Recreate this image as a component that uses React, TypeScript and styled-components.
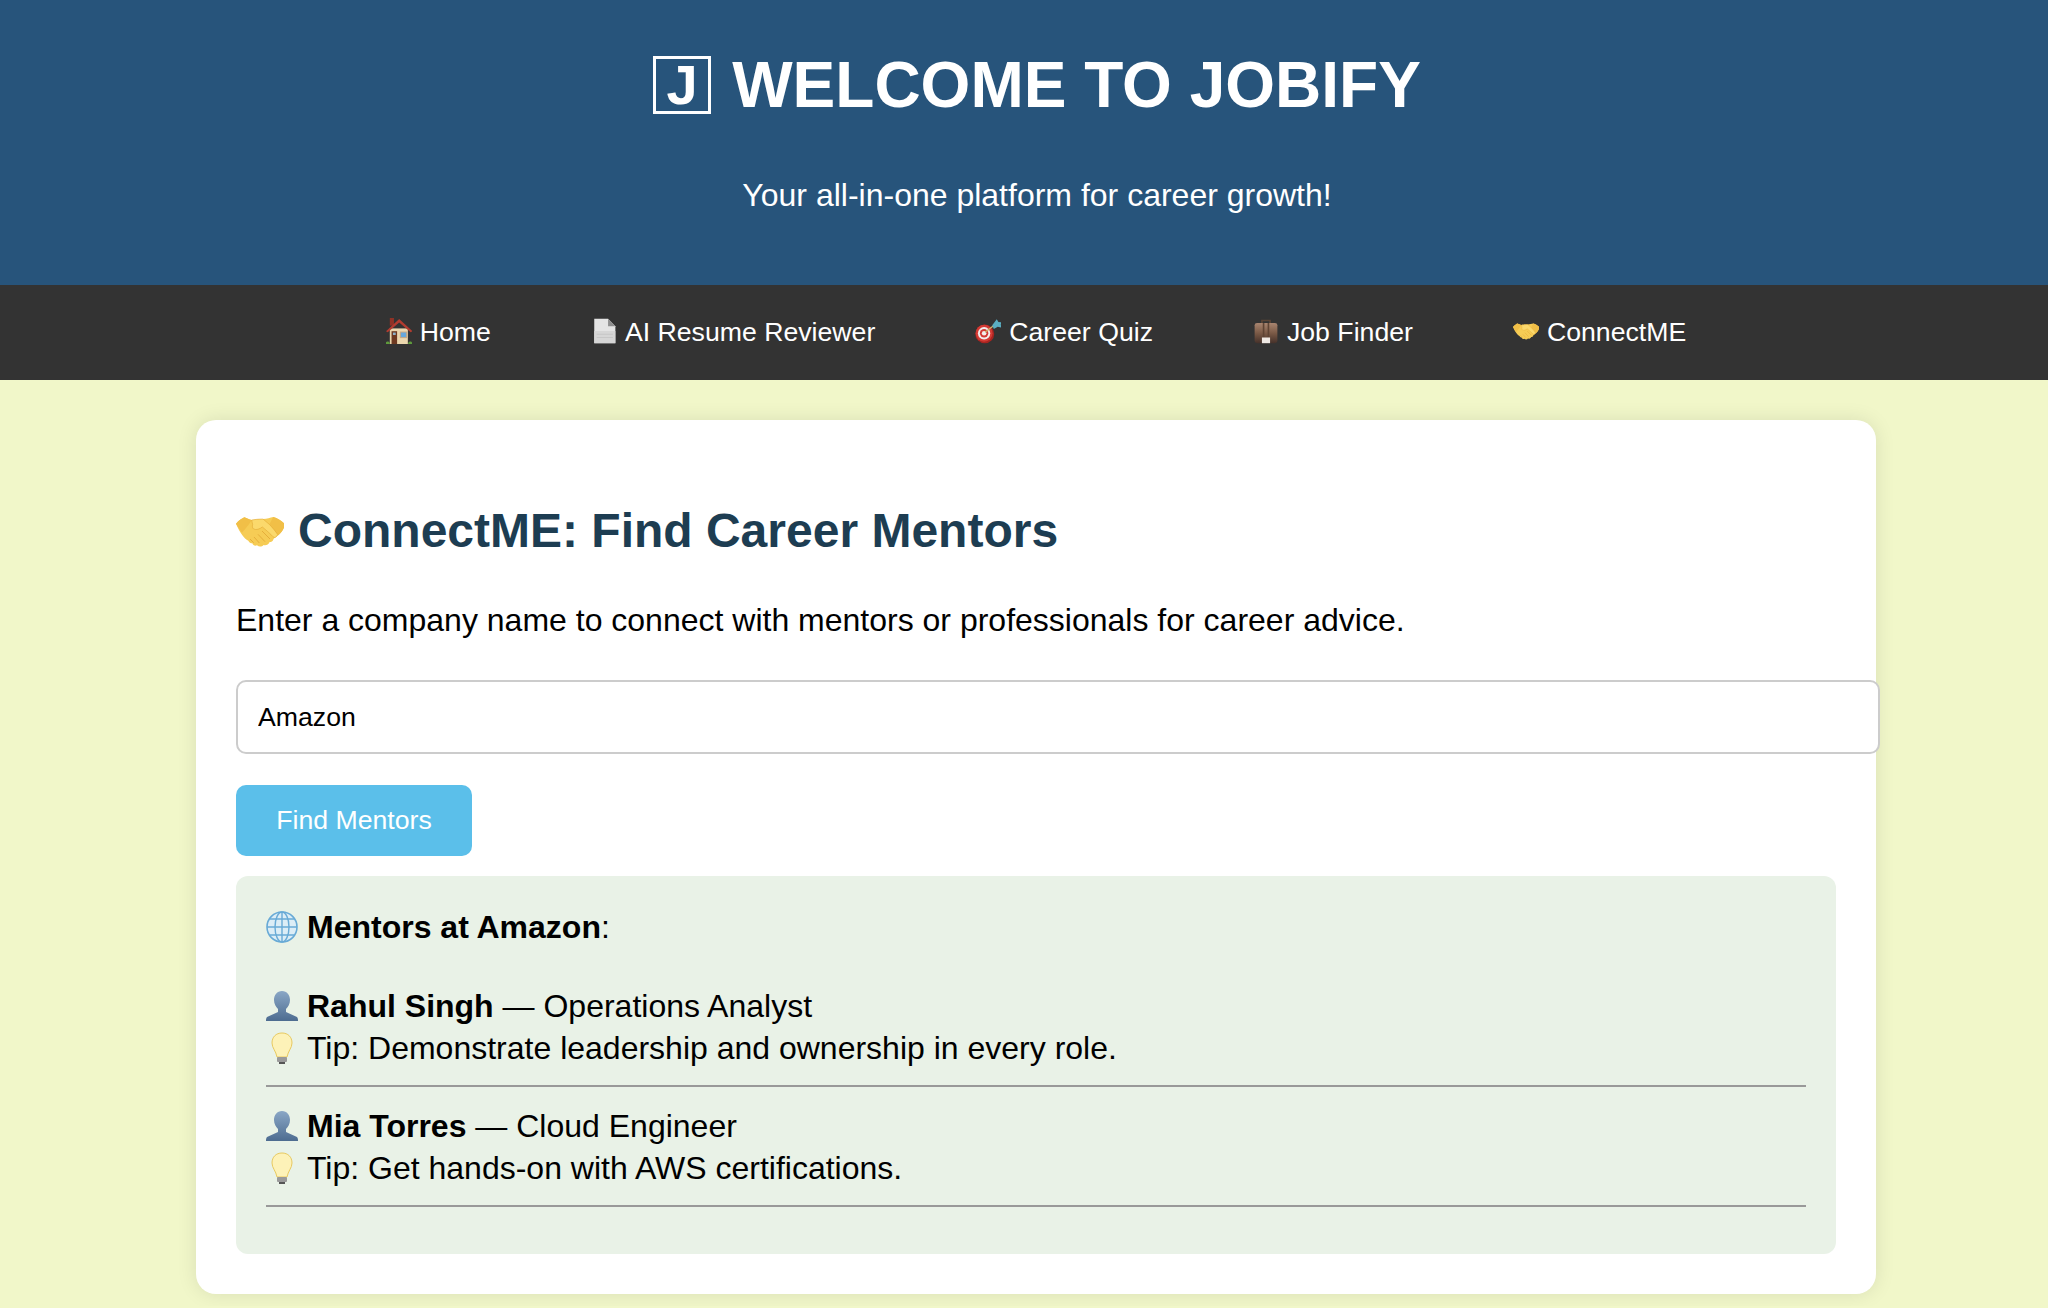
import React from "react";
import styled, { createGlobalStyle } from "styled-components";

const GlobalStyle = createGlobalStyle`
  html, body {
    margin: 0;
    padding: 0;
    background-color: #f1f7c9;
    font-family: "Liberation Sans", Arial, sans-serif;
    color: #000;
  }
`;

const Header = styled.header`
  background-color: #27547b;
  color: #fff;
  text-align: center;
  padding: 48px 0 74px 26px;
`;

const Title = styled.h1`
  margin: 0 0 57px;
  display: flex;
  justify-content: center;
  align-items: center;
  gap: 21px;
  font-size: 64px;
  line-height: 74px;
  font-weight: 700;
`;

const SquareJ = styled.span`
  box-sizing: border-box;
  width: 58px;
  height: 58px;
  border: 3px solid #fff;
  display: flex;
  justify-content: center;
  align-items: center;
  font-size: 56px;
  line-height: 1;
  font-weight: 700;
`;

const Subtitle = styled.p`
  margin: 0;
  font-size: 32px;
  line-height: 32px;
`;

const Nav = styled.nav`
  background-color: #333;
  height: 95px;
  padding-left: 24px;
  display: flex;
  justify-content: center;
  align-items: center;
  gap: 100px;
`;

const NavLink = styled.a`
  display: flex;
  align-items: center;
  gap: 8px;
  color: #fff;
  font-size: 26.67px;
  text-decoration: none;

  svg {
    margin-bottom: 3px;
  }
`;

const Card = styled.main`
  box-sizing: border-box;
  width: 1680px;
  margin: 40px 0 12px 196px;
  padding: 83px 40px 40px;
  background-color: #fff;
  border-radius: 20px;
  box-shadow: 0 0 20px rgba(0, 0, 0, 0.1);
`;

const Heading = styled.h2`
  margin: 0 0 43px;
  display: flex;
  align-items: center;
  gap: 14px;
  font-size: 48px;
  line-height: 56px;
  color: #1d3d52;
`;

const Intro = styled.p`
  margin: 0 0 41px;
  font-size: 32px;
  line-height: 37px;
`;

const CompanyInput = styled.input`
  display: block;
  box-sizing: content-box;
  width: 100%;
  height: 70px;
  padding: 0 20px;
  border: 2px solid #ccc;
  border-radius: 10px;
  font-family: inherit;
  font-size: 26.67px;
  color: #000;
  background: #fff;
  outline: none;
`;

const FindButton = styled.button`
  display: block;
  width: 236px;
  height: 71px;
  margin: 31px 0 20px;
  border: 0;
  border-radius: 10px;
  background-color: #5bbfea;
  color: #fff;
  font-family: inherit;
  font-size: 26.67px;
`;

const Results = styled.section`
  box-sizing: border-box;
  height: 378px;
  padding: 30px;
  background-color: #e9f2e7;
  border-radius: 12px;
  font-size: 32px;
  line-height: 42px;
`;

const ResultsTitle = styled.div`
  margin-bottom: 37px;
`;

const Line = styled.div`
  display: flex;
  align-items: center;
  gap: 9px;
  white-space: pre;
`;

const Divider = styled.hr`
  margin: 16px 0 18px;
  height: 2px;
  border: 0;
  background-color: #999;
`;

const EmojiBox = styled.svg<{ $size: number }>`
  width: ${({ $size }) => $size}px;
  height: ${({ $size }) => $size}px;
  flex: none;
`;

type EmojiName =
  | "house"
  | "page"
  | "target"
  | "briefcase"
  | "handshake"
  | "globe"
  | "bust"
  | "bulb";

const emojiArt: Record<EmojiName, React.ReactNode> = {
  house: (
    <g transform="scale(.427) translate(-22 -20)">
      <rect x="33" y="20" width="12" height="22" fill="#8e3226" />
      <path d="M33 50h52v45H33z" fill="#ecd7ae" />
      <path d="M22 58 60 23l38 35-5 3-33-28-33 28z" fill="#b23c30" />
      <path d="M38 58h16v37H38z" fill="#6e3a22" />
      <rect x="42" y="62" width="8" height="7" fill="#8fb3c9" />
      <rect x="62" y="59" width="21" height="19" fill="#c7a984" />
      <rect x="65" y="62" width="15" height="13" fill="#67a8dc" />
      <path d="M20 97c0-7 4-10 7-9 3-1 6 2 7 9zM85 97c1-7 4-10 7-9 3-1 6 2 6 9z" fill="#5f9b3c" />
    </g>
  ),
  page: (
    <>
      <path d="M4 1h17l9 9v21H4z" fill="#e4e4e4" />
      <path d="M21 1l9 9h-9z" fill="#8e8e8e" />
      <path d="M4 16h26v15H4z" fill="#d6d6d6" />
      <path d="M7 20h20M7 24h20" stroke="#c4c4c4" strokeWidth="1" />
    </>
  ),
  target: (
    <g transform="scale(.4) translate(-15 -22)">
      <circle cx="45" cy="71" r="29" fill="#a82420" />
      <circle cx="43" cy="69" r="26" fill="#d33a34" />
      <circle cx="43" cy="69" r="19" fill="#f3eded" />
      <circle cx="43" cy="69" r="13" fill="#d33a34" />
      <circle cx="43" cy="69" r="7" fill="#f3eded" />
      <path d="M46 66 72 46" stroke="#c9b46c" strokeWidth="4" />
      <path d="M68 44 82 26l5 8 14 2-7 6 3 10-12-3-12 7z" fill="#5aaec2" />
    </g>
  ),
  briefcase: (
    <>
      <defs>
        <linearGradient id="caseBody" x1="0" y1="0" x2="0" y2="1">
          <stop offset="0" stopColor="#a98570" />
          <stop offset=".5" stopColor="#7b5a46" />
          <stop offset="1" stopColor="#45312a" />
        </linearGradient>
      </defs>
      <path d="M10 7V2h12v5h-2V4h-8v3z" fill="#5a4436" />
      <rect x="2" y="6" width="28" height="25" rx="3" fill="url(#caseBody)" />
      <path d="M12 6h2v18h-2zM18 6h2v18h-2z" fill="#5f4434" />
      <rect x="11" y="24" width="10" height="7" fill="#efe9e4" />
    </>
  ),
  handshake: (
    <g transform="scale(.2222) translate(-18 12)">
      <path d="M18 38c8-9 16-15 25-19 8 3 14 7 22 8 9-1 18-3 34-3 12-1 22-4 31-6 13 4 26 12 35 22-3 13-10 24-20 33l-14 10c-2 8-8 10-12 10-4 9-12 11-18 9-6 6-14 6-20 1-6 3-12 0-14-6-5 0-10-3-12-8-13-7-25-23-37-51z" fill="#f6cc55" />
      <path d="M18 38c8-9 16-15 25-19 8 3 14 7 22 8-7 13-22 30-29 38-3-6-13-18-18-27zM130 18c13 4 26 12 35 22-3 13-10 24-20 33-6-7-16-22-27-33z" fill="#f1bf47" />
      <path d="M65 27c9-1 18-3 34-3l20 17c7 8 18 20 24 30l-4 6c-4 4-8 2-10 0-8-9-20-19-32-29-8 6-18 10-26 6-4-3-5-8-3-13z" fill="#fbd96c" stroke="#dc9f2d" strokeWidth="1.500" />
      <path d="M96 60l24 24M84 70l21 22M72 78l16 18M60 84l11 11" fill="none" stroke="#dc9f2d" strokeWidth="2" />
    </g>
  ),
  globe: (
    <>
      <circle cx="16" cy="16" r="15" fill="#dcedf6" stroke="#68aad6" strokeWidth="1.6" />
      <ellipse cx="16" cy="16" rx="7" ry="15" fill="none" stroke="#68aad6" strokeWidth="1.4" />
      <path d="M16 1v30M1 16h30M4 8h24M4 24h24" stroke="#68aad6" strokeWidth="1.4" fill="none" />
    </>
  ),
  bust: (
    <>
      <defs>
        <linearGradient id="bustShade" x1="0" y1="0" x2="0" y2="1">
          <stop offset="0" stopColor="#8aa7c6" />
          <stop offset="1" stopColor="#4d6c90" />
        </linearGradient>
      </defs>
      <path d="M16 1c5 0 8 4 8 9 0 4-2 7-4 9v3l11 5c1 1 1 3 1 4H0c0-1 0-3 1-4l11-5v-3c-2-2-4-5-4-9 0-5 3-9 8-9z" fill="url(#bustShade)" />
    </>
  ),
  bulb: (
    <>
      <path d="M16 1c6 0 10 4 10 10 0 5-4 8-5 14H11c-1-6-5-9-5-14C6 5 10 1 16 1z" fill="#fdf2b8" stroke="#e8c95f" strokeWidth="1" />
      <rect x="11" y="25" width="10" height="5" rx="1" fill="#9a9a9a" />
      <rect x="13" y="30" width="6" height="2" fill="#555" />
    </>
  ),
};

const Emoji = ({ name, size }: { name: EmojiName; size: number }) => (
  <EmojiBox $size={size} viewBox="0 0 32 32" aria-hidden="true">
    {emojiArt[name]}
  </EmojiBox>
);

const navItems: { icon: EmojiName; label: string }[] = [
  { icon: "house", label: "Home" },
  { icon: "page", label: "AI Resume Reviewer" },
  { icon: "target", label: "Career Quiz" },
  { icon: "briefcase", label: "Job Finder" },
  { icon: "handshake", label: "ConnectME" },
];

const mentors = [
  {
    name: "Rahul Singh",
    role: "Operations Analyst",
    tip: "Demonstrate leadership and ownership in every role.",
  },
  {
    name: "Mia Torres",
    role: "Cloud Engineer",
    tip: "Get hands-on with AWS certifications.",
  },
];

export default function App() {
  return (
    <>
      <GlobalStyle />
      <Header>
        <Title>
          <SquareJ>J</SquareJ>
          WELCOME TO JOBIFY
        </Title>
        <Subtitle>Your all-in-one platform for career growth!</Subtitle>
      </Header>
      <Nav>
        {navItems.map((item) => (
          <NavLink href="#" key={item.label}>
            <Emoji name={item.icon} size={26} />
            {item.label}
          </NavLink>
        ))}
      </Nav>
      <Card>
        <Heading>
          <Emoji name="handshake" size={48} />
          ConnectME: Find Career Mentors
        </Heading>
        <Intro>
          Enter a company name to connect with mentors or professionals for career advice.
        </Intro>
        <CompanyInput defaultValue="Amazon" />
        <FindButton>Find Mentors</FindButton>
        <Results>
          <ResultsTitle>
            <Line>
              <Emoji name="globe" size={32} />
              <span>
                <strong>Mentors at Amazon</strong>:
              </span>
            </Line>
          </ResultsTitle>
          {mentors.map((mentor) => (
            <div key={mentor.name}>
              <Line>
                <Emoji name="bust" size={32} />
                <span>
                  <strong>{mentor.name}</strong> — {mentor.role}
                </span>
              </Line>
              <Line>
                <Emoji name="bulb" size={32} />
                <span>Tip: {mentor.tip}</span>
              </Line>
              <Divider />
            </div>
          ))}
        </Results>
      </Card>
    </>
  );
}
